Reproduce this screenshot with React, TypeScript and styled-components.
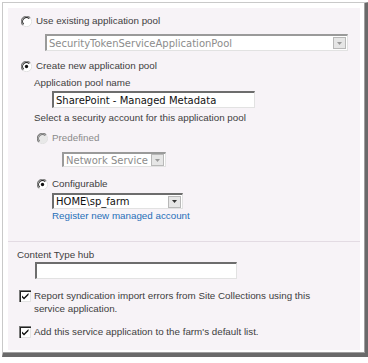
import React from "react";
import styled, { createGlobalStyle } from "styled-components";

const GlobalStyle = createGlobalStyle`
  body {
    margin: 0;
    background: #ffffff;
    font-family: "Liberation Sans", Arial, sans-serif;
  }
`;

const Frame = styled.div`
  margin: 2px 0 0 2px;
  width: 352px;
  padding: 5px 5px 3px 5px;
  background: #ffffff;
  border-top: 1px solid #c9c9c9;
  border-left: 1px solid #c9c9c9;
  border-right: 4px solid #6a6a6a;
  border-bottom: 4px solid #6a6a6a;
  box-shadow: inset -1px -1px 0 #a0a0a0;
`;

const Panel = styled.div`
  background: #f7f3f7;
  height: 342px;
  display: flex;
  flex-direction: column;
  color: #404040;
  font-size: 9.8px;
`;

const Section = styled.div`
  display: flex;
  flex-direction: column;
  padding: 6px 0 0 0;
  height: 227px;
  border-bottom: 1px solid #e3dbe3;
`;

const Row = styled.div<{ $indent: number; $top: number }>`
  display: flex;
  align-items: center;
  gap: 4px;
  height: 14px;
  margin-left: ${(p) => p.$indent}px;
  margin-top: ${(p) => p.$top}px;
  line-height: 14px;
  white-space: nowrap;
`;

const Label = styled.span<{ $muted?: boolean }>`
  color: ${(p) => (p.$muted ? "#8a8a8a" : "#404040")};
`;

const Field = styled.div<{
  $indent: number;
  $top: number;
  $width: number;
  $height: number;
  $disabled?: boolean;
}>`
  display: flex;
  align-items: center;
  box-sizing: border-box;
  margin-left: ${(p) => p.$indent}px;
  margin-top: ${(p) => p.$top}px;
  width: ${(p) => p.$width}px;
  height: ${(p) => p.$height}px;
  background: #ffffff;
  border-top: 2px solid ${(p) => (p.$disabled ? "#9a9a9a" : "#6d6d6d")};
  border-left: 2px solid ${(p) => (p.$disabled ? "#9a9a9a" : "#6d6d6d")};
  border-right: 1px solid #e2e2e2;
  border-bottom: 1px solid #e2e2e2;
  padding-left: 2px;
  font-family: "DejaVu Sans", Verdana, sans-serif;
  font-size: 10px;
  line-height: 13px;
  color: ${(p) => (p.$disabled ? "#8c8c8c" : "#111111")};
  white-space: nowrap;
`;

const FieldText = styled.span`
  flex: 1;
  overflow: hidden;
`;

const DropButton = styled.div<{ $disabled?: boolean }>`
  width: 13px;
  height: 12px;
  margin-right: 1px;
  flex-shrink: 0;
  box-sizing: border-box;
  background: #e6e6e6;
  border: 1px solid #b8b8b8;
  display: flex;
  align-items: center;
  justify-content: center;
  color: ${(p) => (p.$disabled ? "#9a9a9a" : "#333333")};
`;

const Link = styled.a`
  margin-left: 44px;
  color: #1f6fb8;
  text-decoration: none;
  line-height: 13px;
  height: 13px;
  white-space: nowrap;
`;

const Lower = styled.div`
  display: flex;
  flex-direction: column;
  padding-top: 6px;
`;

const CheckRow = styled.div<{ $top: number }>`
  display: flex;
  align-items: flex-start;
  gap: 3px;
  margin-left: 11px;
  margin-top: ${(p) => p.$top}px;
  line-height: 13px;
`;

const CheckText = styled.span`
  width: 290px;
`;

const Radio = ({ checked, disabled }: { checked?: boolean; disabled?: boolean }) => (
  <svg width="11" height="11" viewBox="0 0 12 12">
    <circle cx="6" cy="6" r="5.5" fill={disabled ? "#e8e8e8" : "#ffffff"} />
    <path d="M10 2 A5.5 5.5 0 0 0 2 10" fill="none" stroke="#7a7a7a" strokeWidth="1.2" />
    <path d="M9 3 A4.2 4.2 0 0 0 3 9" fill="none" stroke={disabled ? "#777" : "#222"} strokeWidth="1.1" />
    <path d="M2 10 A5.5 5.5 0 0 0 10 2" fill="none" stroke="#e0e0e0" strokeWidth="1" />
    {checked && <circle cx="6" cy="6" r="1.8" fill="#111" />}
  </svg>
);

const Check = () => (
  <svg width="12" height="12" viewBox="0 0 12 12" style={{ flexShrink: 0, marginTop: 1 }}>
    <rect x="0" y="0" width="12" height="12" fill="#7a7a7a" />
    <rect x="1" y="1" width="11" height="11" fill="#222" />
    <rect x="2" y="2" width="10" height="10" fill="#e4e4e4" />
    <rect x="2" y="2" width="9" height="9" fill="#ffffff" />
    <path d="M3 5.5 L5 7.5 L9.5 3 L9.5 5 L5 9.5 L3 7.5 Z" fill="#111" />
  </svg>
);

const Arrow = () => (
  <svg width="5" height="3" viewBox="0 0 5 3">
    <path d="M0 0 H5 L2.5 3 Z" fill="currentColor" />
  </svg>
);

export default function App() {
  return (
    <>
      <GlobalStyle />
      <Frame>
        <Panel>
          <Section>
            <Row $indent={13} $top={0}>
              <Radio />
              <Label>Use existing application pool</Label>
            </Row>
            <Field $indent={37} $top={6} $width={303} $height={17} $disabled>
              <FieldText>SecurityTokenServiceApplicationPool</FieldText>
              <DropButton $disabled>
                <Arrow />
              </DropButton>
            </Field>
            <Row $indent={13} $top={8}>
              <Radio checked />
              <Label>Create new application pool</Label>
            </Row>
            <Row $indent={26} $top={3}>
              <Label>Application pool name</Label>
            </Row>
            <Field $indent={44} $top={1} $width={203} $height={17}>
              <FieldText>SharePoint - Managed Metadata</FieldText>
            </Field>
            <Row $indent={26} $top={3}>
              <Label>Select a security account for this application pool</Label>
            </Row>
            <Row $indent={29} $top={6}>
              <Radio disabled />
              <Label $muted>Predefined</Label>
            </Row>
            <Field $indent={54} $top={7} $width={104} $height={15} $disabled>
              <FieldText>Network Service</FieldText>
              <DropButton $disabled>
                <Arrow />
              </DropButton>
            </Field>
            <Row $indent={29} $top={10}>
              <Radio checked />
              <Label>Configurable</Label>
            </Row>
            <Field $indent={44} $top={2} $width={131} $height={16}>
              <FieldText>HOME\sp_farm</FieldText>
              <DropButton>
                <Arrow />
              </DropButton>
            </Field>
            <Link href="#">Register new managed account</Link>
          </Section>
          <Lower>
            <Row $indent={9} $top={0}>
              <Label>Content Type hub</Label>
            </Row>
            <Field $indent={27} $top={0} $width={202} $height={17} />
            <CheckRow $top={10}>
              <Check />
              <CheckText>
                Report syndication import errors from Site Collections using this service
                application.
              </CheckText>
            </CheckRow>
            <CheckRow $top={10}>
              <Check />
              <CheckText>Add this service application to the farm's default list.</CheckText>
            </CheckRow>
          </Lower>
        </Panel>
      </Frame>
    </>
  );
}
